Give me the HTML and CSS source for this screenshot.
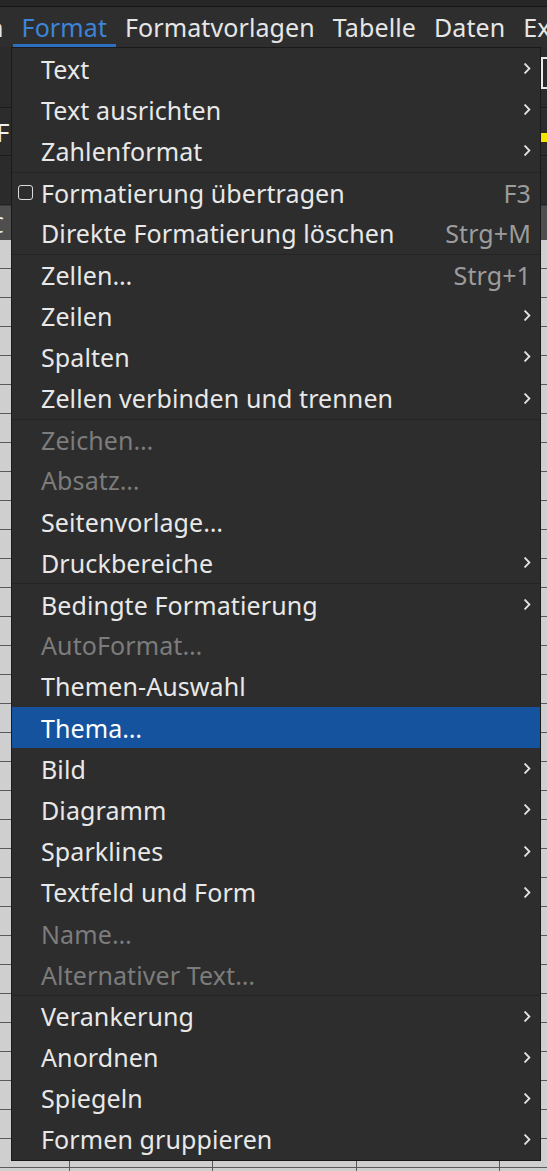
FILE: index.html
```html
<!DOCTYPE html>
<html lang="de">
<head>
<meta charset="utf-8">
<link rel="stylesheet" href="styles.css">
</head>
<body>
<div class="app">
  <div class="topstrip"></div>
  <div class="menubar">
    <span class="mb-item mb-cut">n</span>
    <span class="mb-item mb-active">Format</span>
    <span class="mb-item">Formatvorlagen</span>
    <span class="mb-item">Tabelle</span>
    <span class="mb-item">Daten</span>
    <span class="mb-item">Ex</span>
  </div>
  <div class="toolbar">
    <div class="tb-right"><span class="tb-icon"></span></div>
  </div>
  <div class="toolbar2">
    <span class="tb-letter">F</span>
    <div class="tb-right2"><span class="yellow"></span></div>
  </div>
  <div class="toolbar3"></div>
  <div class="colheader"><span class="ch-letter">C</span></div>
  <div class="grid"></div>
</div>

<div class="menu">
  <div class="mi"><span class="lbl">Text</span><svg class="arr" viewBox="0 0 7 11"><polyline points="1.2,1.2 5.4,5.5 1.2,9.8"/></svg></div>
  <div class="mi"><span class="lbl">Text ausrichten</span><svg class="arr" viewBox="0 0 7 11"><polyline points="1.2,1.2 5.4,5.5 1.2,9.8"/></svg></div>
  <div class="mi"><span class="lbl">Zahlenformat</span><svg class="arr" viewBox="0 0 7 11"><polyline points="1.2,1.2 5.4,5.5 1.2,9.8"/></svg></div>
  <div class="mi sep"><span class="chk"></span><span class="lbl">Formatierung übertragen</span><span class="sc">F3</span></div>
  <div class="mi"><span class="lbl">Direkte Formatierung löschen</span><span class="sc">Strg+M</span></div>
  <div class="mi sep"><span class="lbl">Zellen…</span><span class="sc">Strg+1</span></div>
  <div class="mi"><span class="lbl">Zeilen</span><svg class="arr" viewBox="0 0 7 11"><polyline points="1.2,1.2 5.4,5.5 1.2,9.8"/></svg></div>
  <div class="mi"><span class="lbl">Spalten</span><svg class="arr" viewBox="0 0 7 11"><polyline points="1.2,1.2 5.4,5.5 1.2,9.8"/></svg></div>
  <div class="mi"><span class="lbl">Zellen verbinden und trennen</span><svg class="arr" viewBox="0 0 7 11"><polyline points="1.2,1.2 5.4,5.5 1.2,9.8"/></svg></div>
  <div class="mi sep dis"><span class="lbl">Zeichen…</span></div>
  <div class="mi dis"><span class="lbl">Absatz…</span></div>
  <div class="mi"><span class="lbl">Seitenvorlage…</span></div>
  <div class="mi"><span class="lbl">Druckbereiche</span><svg class="arr" viewBox="0 0 7 11"><polyline points="1.2,1.2 5.4,5.5 1.2,9.8"/></svg></div>
  <div class="mi sep"><span class="lbl">Bedingte Formatierung</span><svg class="arr" viewBox="0 0 7 11"><polyline points="1.2,1.2 5.4,5.5 1.2,9.8"/></svg></div>
  <div class="mi dis"><span class="lbl">AutoFormat…</span></div>
  <div class="mi"><span class="lbl">Themen-Auswahl</span></div>
  <div class="mi hl"><span class="lbl">Thema…</span></div>
  <div class="mi"><span class="lbl">Bild</span><svg class="arr" viewBox="0 0 7 11"><polyline points="1.2,1.2 5.4,5.5 1.2,9.8"/></svg></div>
  <div class="mi"><span class="lbl">Diagramm</span><svg class="arr" viewBox="0 0 7 11"><polyline points="1.2,1.2 5.4,5.5 1.2,9.8"/></svg></div>
  <div class="mi"><span class="lbl">Sparklines</span><svg class="arr" viewBox="0 0 7 11"><polyline points="1.2,1.2 5.4,5.5 1.2,9.8"/></svg></div>
  <div class="mi"><span class="lbl">Textfeld und Form</span><svg class="arr" viewBox="0 0 7 11"><polyline points="1.2,1.2 5.4,5.5 1.2,9.8"/></svg></div>
  <div class="mi dis"><span class="lbl">Name…</span></div>
  <div class="mi dis"><span class="lbl">Alternativer Text…</span></div>
  <div class="mi sep"><span class="lbl">Verankerung</span><svg class="arr" viewBox="0 0 7 11"><polyline points="1.2,1.2 5.4,5.5 1.2,9.8"/></svg></div>
  <div class="mi"><span class="lbl">Anordnen</span><svg class="arr" viewBox="0 0 7 11"><polyline points="1.2,1.2 5.4,5.5 1.2,9.8"/></svg></div>
  <div class="mi"><span class="lbl">Spiegeln</span><svg class="arr" viewBox="0 0 7 11"><polyline points="1.2,1.2 5.4,5.5 1.2,9.8"/></svg></div>
  <div class="mi"><span class="lbl">Formen gruppieren</span><svg class="arr" viewBox="0 0 7 11"><polyline points="1.2,1.2 5.4,5.5 1.2,9.8"/></svg></div>
</div>
</body>
</html>
```
FILE: styles.css
```css
* { box-sizing: border-box; }
html, body {
  margin: 0;
  padding: 0;
  width: 547px;
  height: 1171px;
  overflow: hidden;
  background: #cfcfcf;
  font-family: "Noto Sans", "Open Sans", sans-serif;
  font-size: 25px;
  letter-spacing: 0.1px;
}
.app {
  display: flex;
  flex-direction: column;
  height: 1171px;
}
.topstrip {
  height: 7px;
  background: #262626;
  border-bottom: 1px solid #161616;
}
.menubar {
  height: 40px;
  background: #2e2e2e;
  display: flex;
  align-items: stretch;
  white-space: nowrap;
  overflow: hidden;
  color: #e6e6e6;
}
.mb-item {
  padding: 0 9px;
  display: flex;
  align-items: center;
  padding-bottom: 1px;
}
.mb-cut { margin-left: -21px; }
.mb-active {
  color: #3d84d9;
  border-bottom: 3px solid #2f6fc2;
  padding-bottom: 0;
  padding-top: 2px;
}
.toolbar {
  height: 61px;
  background: #2b2b2b;
  border-bottom: 1px solid #1c1c1c;
  display: flex;
  justify-content: flex-end;
}
.tb-right { width: 6px; padding-top: 10px; }
.tb-icon {
  display: block;
  width: 8px;
  height: 32px;
  border: 2px solid #eaeaea;
  border-right: none;
  background: #2b2b2b;
}
.toolbar2 {
  height: 48px;
  background: #2c2c2c;
  border-bottom: 1px solid #1c1c1c;
  display: flex;
  justify-content: space-between;
  color: #f0f0f0;
}
.tb-letter {
  margin-left: -4px;
  margin-top: 6px;
  font-size: 26px;
}
.tb-right2 { width: 6px; padding-top: 25px; }
.yellow { display: block; height: 9px; background: #f5e400; }
.toolbar3 {
  height: 49px;
  background: #2b2b2b;
  border-bottom: 1px solid #222;
}
.colheader {
  height: 35px;
  background: #4e4e4e;
  color: #e8e8e8;
  border-top: 1px solid #3a3a3a;
}
.ch-letter { margin-left: -10px; font-size: 22px; line-height: 33px; }
.grid {
  flex: 1;
  background-color: #cfcfcf;
  background-image:
    repeating-linear-gradient(to bottom, transparent 0, transparent 28px, #5a5a5a 28px, #5a5a5a 29px),
    linear-gradient(to right, transparent 69px, #5a5a5a 69px, #5a5a5a 70px, transparent 70px, transparent 212px, #5a5a5a 212px, #5a5a5a 213px, transparent 213px, transparent 356px, #5a5a5a 356px, #5a5a5a 357px, transparent 357px, transparent 499px, #5a5a5a 499px, #5a5a5a 500px, transparent 500px);
  background-position: 0 0, 0 0;
}

.menu {
  position: absolute;
  left: 11px;
  top: 47px;
  width: 530px;
  height: 1114px;
  background: #2d2d2d;
  border: 1px solid #1a1a1a;
  padding: 0;
  color: #e8e8e8;
}
.mi {
  position: relative;
  height: 41.2px;
  display: flex;
  align-items: center;
  padding-left: 29px;
  padding-right: 9px;
  white-space: nowrap;
}
.mi.sep { border-top: 1px solid #242424; }
.mi.dis { color: #7c7c7c; }
.mi.hl { background: #15539e; color: #ffffff; }
.lbl { flex: 1; }
.sc { color: #9c9c9c; }
.arr {
  width: 7px;
  height: 11px;
  margin-right: 0;
}
.arr polyline {
  fill: none;
  stroke: #e4e4e4;
  stroke-width: 1.8;
  stroke-linecap: square;
}
.chk {
  position: absolute;
  left: 6px;
  top: 50%;
  width: 15px;
  height: 15px;
  margin-top: -8px;
  border: 1.5px solid #dcdcdc;
  border-radius: 3px;
}
```
